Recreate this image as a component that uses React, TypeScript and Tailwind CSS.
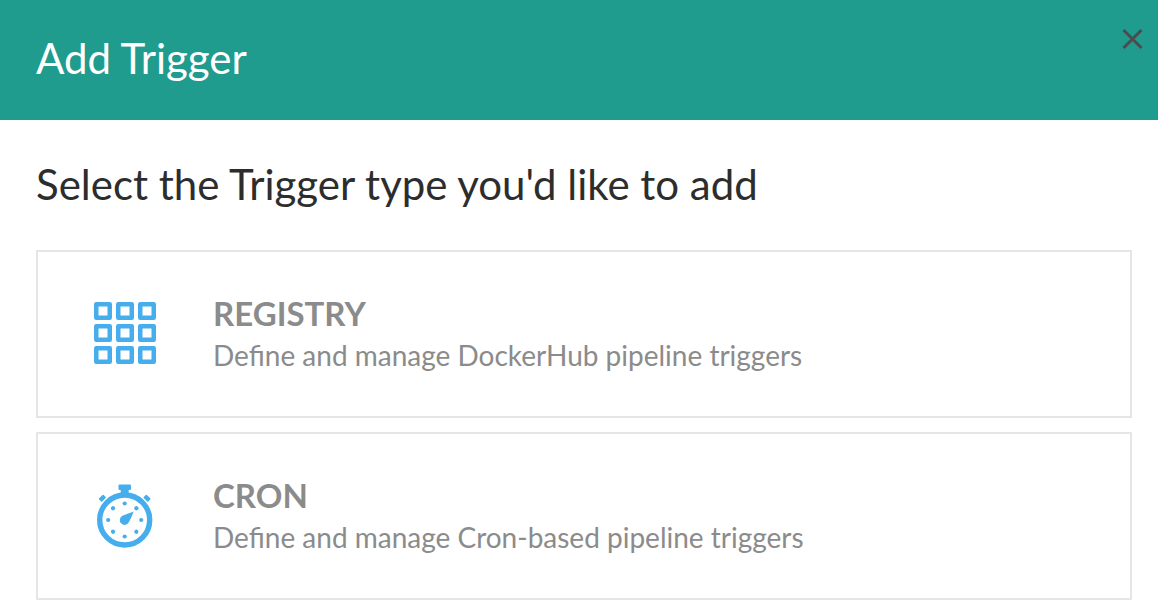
import type { ReactNode } from "react";

function RegistryIcon() {
  const cells = [0, 1, 2];
  return (
    <svg aria-hidden="true" className="size-16" viewBox="0 0 64 64" fill="none" stroke="#46aeed" strokeWidth="4.5">
      {cells.map((row) =>
        cells.map((col) => (
          <rect key={`${row}-${col}`} x={3.25 + col * 22} y={2.25 + row * 22} width="13.5" height="13.5" strokeLinejoin="round" />
        )),
      )}
    </svg>
  );
}

function CronIcon() {
  const ticks = [0, 45, 90, 135, 180, 225, 270, 315];
  return (
    <svg aria-hidden="true" className="size-16" viewBox="0 0 64 64" fill="#46aeed">
      <rect x="25.5" y="0.5" width="12.5" height="5.5" rx="1" />
      <rect x="27.7" y="4" width="8" height="6" />
      <circle cx="31.7" cy="36" r="25" fill="none" stroke="#46aeed" strokeWidth="5.4" />
      <rect x="6.2" y="12" width="6.4" height="4.4" rx="0.8" transform="rotate(-45 9.4 14.2)" />
      <rect x="50.8" y="12" width="6.4" height="4.4" rx="0.8" transform="rotate(45 54 14.2)" />
      {ticks.map((angle) => (
        <circle key={angle} cx="31.7" cy="19.5" r="2.1" transform={`rotate(${angle} 31.7 36)`} />
      ))}
      <path d="M40.7 27.4Q38.2 33.8 36 38A4.8 4.8 0 1 1 29.4 31.8Q34 29.8 40.7 27.4Z" />
    </svg>
  );
}

function TriggerOption({ icon, title, description }: { icon: ReactNode; title: string; description: string }) {
  return (
    <button type="button" className="flex h-42 w-full items-center gap-14 border-2 border-[#e5e5e5] bg-white px-[55px] text-left text-[#8b8b8b]">
      {icon}
      <span className="flex flex-col">
        <span className="text-[33px] leading-[42px] font-bold">{title}</span>
        <span className="text-[28px] leading-[42px]">{description}</span>
      </span>
    </button>
  );
}

export default function App() {
  return (
    <div role="dialog" aria-labelledby="dialog-title" className="bg-white font-['Lato',sans-serif]">
      <header className="flex h-30 items-start justify-between bg-[#1f9c8d] pt-7 pr-4 pl-9">
        <h1 id="dialog-title" className="text-[42px] leading-[60px] text-white">Add Trigger</h1>
        <button type="button" aria-label="Close" className="text-[#4c4c4c]">
          <svg aria-hidden="true" className="size-5" viewBox="0 0 20 20" fill="none" stroke="currentColor" strokeWidth="3" overflow="visible">
            <path d="M1.5 2 19.5 20M19.5 2 1.5 20" />
          </svg>
        </button>
      </header>
      <main className="pt-[34px] pr-[26px] pb-2 pl-9">
        <h2 className="mb-9 text-[42px] leading-[60px] text-[#2d2d2d]">Select the Trigger type you'd like to add</h2>
        <div className="flex flex-col gap-[14px]">
          <TriggerOption icon={<RegistryIcon />} title="REGISTRY" description="Define and manage DockerHub pipeline triggers" />
          <TriggerOption icon={<CronIcon />} title="CRON" description="Define and manage Cron-based pipeline triggers" />
        </div>
      </main>
    </div>
  );
}
